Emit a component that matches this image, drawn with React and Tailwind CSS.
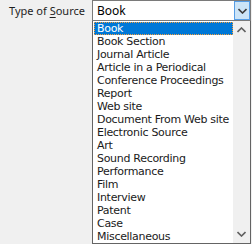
import { useState } from 'react';

const sources = [
    'Book',
    'Book Section',
    'Journal Article',
    'Article in a Periodical',
    'Conference Proceedings',
    'Report',
    'Web site',
    'Document From Web site',
    'Electronic Source',
    'Art',
    'Sound Recording',
    'Performance',
    'Film',
    'Interview',
    'Patent',
    'Case',
    'Miscellaneous',
];

function Chevron({ up = false, className = '' }) {
    return (
        <svg width="9" height="6" viewBox="0 0 9 6" className={className}>
            <path
                d={up ? 'M0.5 5 L4.5 1 L8.5 5' : 'M0.5 1 L4.5 5 L8.5 1'}
                fill="none"
                stroke="currentColor"
                strokeWidth="1.6"
            />
        </svg>
    );
}

export default function App() {
    const [selected, setSelected] = useState('Book');

    return (
        <div className="flex w-[252px] h-[244px] bg-[#f0f0f0] text-black overflow-hidden" style={{ fontFamily: '"Noto Sans", "Open Sans", sans-serif' }}>
            {/* label */}
            <div className="w-[92px] pl-[9px] pt-[3px] text-[11px] leading-[15px] text-[#1e1e1e] whitespace-nowrap">
                Type of <span className="underline underline-offset-2">S</span>ource
            </div>

            {/* combo */}
            <div className="flex flex-col w-[159px]">
                <div className="flex h-[21px] border border-[#7a7a7a] bg-white">
                    <div className="flex-1 pl-[4px] pt-[2px] text-[12px] leading-[15px]">{selected}</div>
                    <div className="flex items-center justify-center w-[16px] bg-[#cce4f7] border border-[#569de5] text-[#3c3c3c]">
                        <Chevron />
                    </div>
                </div>

                <div className="flex flex-1 border border-t-0 border-[#646464] bg-white">
                    <ul className="flex-1 pt-[1px] pl-[1px] text-[11px] leading-[13px] tracking-[-0.3px]" style={{ fontFamily: '"DejaVu Sans", sans-serif' }}>
                        {sources.map((s) => (
                            <li
                                key={s}
                                onClick={() => setSelected(s)}
                                className={
                                    s === selected
                                        ? 'h-[13px] pl-[3px] bg-[#0078d7] text-white outline-1 outline-dotted outline-[#f7a03c] -outline-offset-1 whitespace-nowrap'
                                        : 'h-[13px] pl-[3px] text-[#1a1a1a] whitespace-nowrap'
                                }
                            >
                                {s}
                            </li>
                        ))}
                    </ul>
                    <div className="flex flex-col justify-between items-center w-[17px] bg-[#f0f0f0] text-[#606060] py-[6px]">
                        <Chevron up />
                        <Chevron />
                    </div>
                </div>
            </div>
        </div>
    );
}
